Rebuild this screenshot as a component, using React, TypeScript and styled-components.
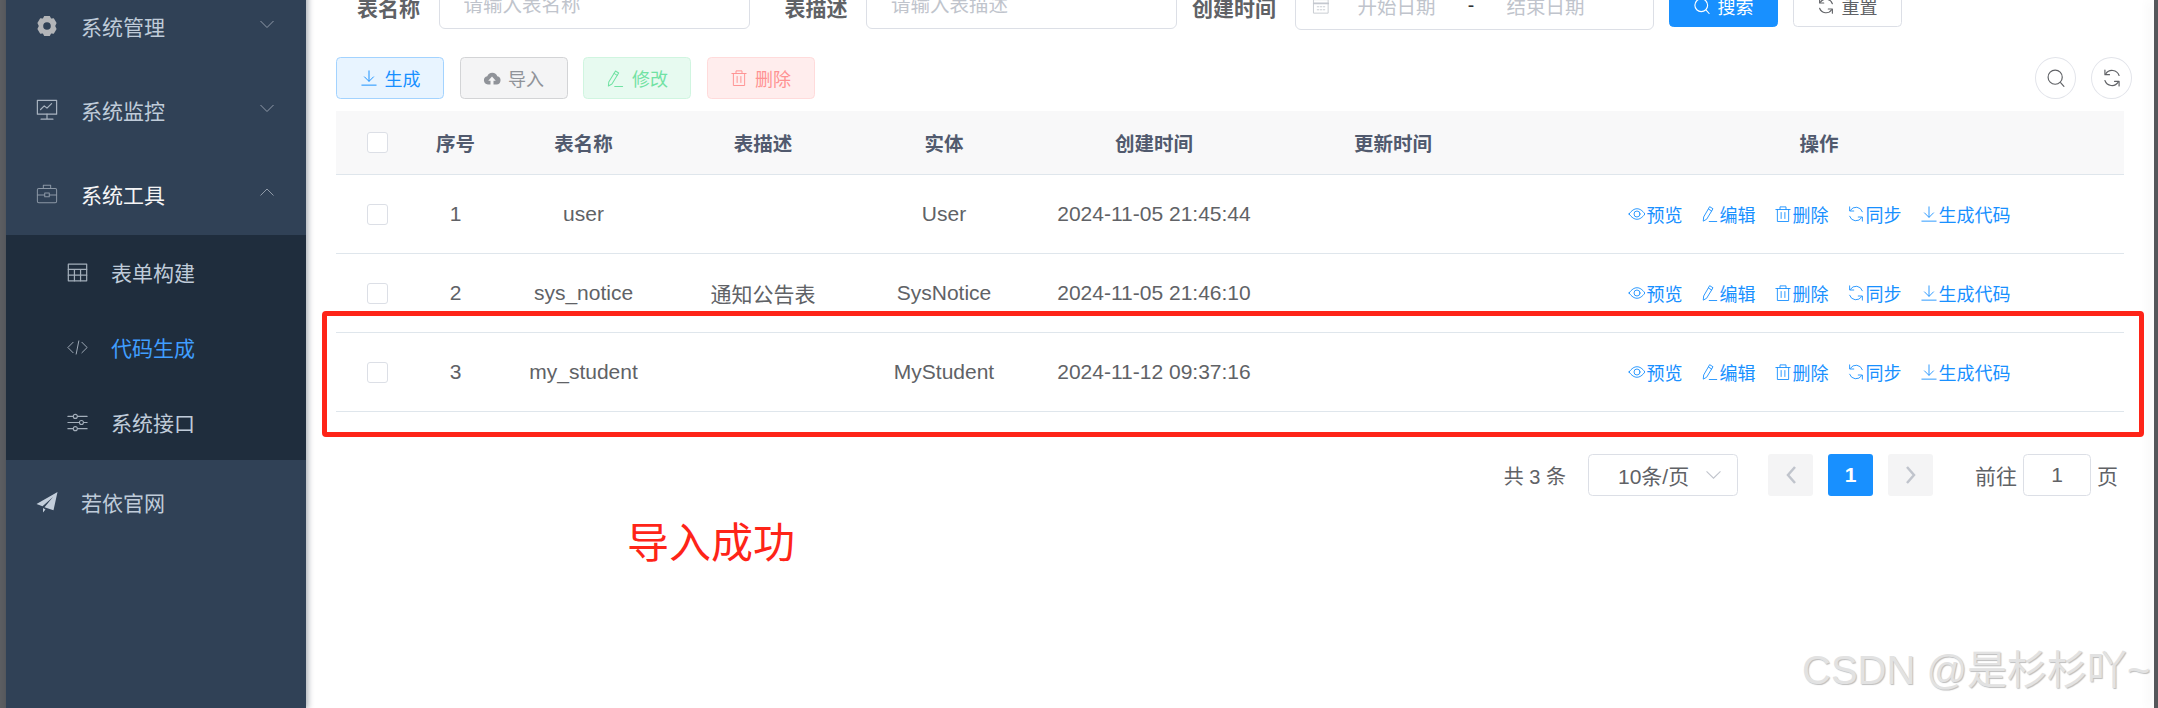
import React from "react";
import styled, { createGlobalStyle, css } from "styled-components";

const GlobalStyle = createGlobalStyle`
  html, body {
    margin: 0;
    padding: 0;
    height: 100%;
    overflow: hidden;
    background: #fff;
  }
  body {
    font-family: "Liberation Sans", "Noto Sans CJK SC", sans-serif;
  }
`;

type IconProps = { size?: number; weight?: number };

const Svg = ({ size = 18, weight = 1.2, children }: IconProps & { children: React.ReactNode }) => (
  <svg
    width={size}
    height={size}
    viewBox="0 0 24 24"
    fill="none"
    stroke="currentColor"
    strokeWidth={weight}
    strokeLinecap="round"
    strokeLinejoin="round"
  >
    {children}
  </svg>
);

//* element style icons
const EyeIcon = (p: IconProps) => (
  <Svg {...p}>
    <path d="M1.5 12C5 7 8.5 5 12 5s7 2 10.5 7c-3.500 5-7 7-10.500 7S5 17 1.500 12z" />
    <circle cx="12" cy="12" r="4" />
  </Svg>
);
const PenIcon = (p: IconProps) => (
  <Svg {...p}>
    <path d="M12 2.500l4 2.500-8.500 14L3 21.500l.5-5z" />
    <path d="M10.200 5.500l4 2.500" />
    <path d="M11 22h10" />
  </Svg>
);
const TrashIcon = (p: IconProps) => (
  <Svg {...p}>
    <path d="M2.500 6h19" />
    <path d="M8 6V2.500h8V6" />
    <path d="M4.500 6v16h15V6" />
    <path d="M9.500 10v8M14.500 10v8" />
  </Svg>
);
const RefreshIcon = (p: IconProps) => (
  <Svg {...p}>
    <path d="M20.500 9A9 9 0 0 0 4.500 7" />
    <path d="M3.500 15a9 9 0 0 0 16 2" />
    <path d="M3.500 2.500V8H9" />
    <path d="M20.500 21.500V16H15" />
  </Svg>
);
const DownloadIcon = (p: IconProps) => (
  <Svg {...p}>
    <path d="M12 2.500V16" />
    <path d="M6 10.500l6 6 6-6" />
    <path d="M2.500 21.500h19" />
  </Svg>
);
const CloudIcon = (p: IconProps) => (
  <svg width={p.size ?? 18} height={p.size ?? 18} viewBox="0 0 24 24" fill="currentColor">
    <path d="M6.500 20.500a5.500 5.500 0 0 1-.8-10.900A7 7 0 0 1 19 9.800a5.400 5.400 0 0 1-1 10.700h-4v-5h3l-5-5.500-5 5.500h3v5z" />
  </svg>
);
const SearchIcon = (p: IconProps) => (
  <Svg {...p}>
    <circle cx="11" cy="11" r="8.500" />
    <path d="M17.500 17.500l4 4.500" />
  </Svg>
);
const CalendarIcon = (p: IconProps) => (
  <Svg {...p}>
    <rect x="2.500" y="3.500" width="19" height="18" />
    <path d="M2.500 8.500h19" strokeWidth={2.600} />
    <path d="M7 13h2M11 13h2M15 13h2M7 17h2M11 17h2M15 17h2" />
  </Svg>
);
const ChevronDown = ({ up, size = 14 }: { up?: boolean; size?: number }) => (
  <svg width={size} height={size} viewBox="0 0 14 14" fill="none" stroke="currentColor" strokeWidth="1">
    <path d={up ? "M.5 10.500L7 4l6.500 6.500" : "M.5 4L7 10.500 13.500 4"} />
  </svg>
);
const GearIcon = () => (
  <svg width="22" height="22" viewBox="0 0 22 22" fill="currentColor">
    <path
      fillRule="evenodd"
      d="M8.200 1h5.600l1.300 2.400 2.700-.1 2.800 4.800-1.400 2.900 1.400 2.900-2.800 4.800-2.700-.1L13.800 21H8.200l-1.300-2.400-2.700.1-2.800-4.800L2.800 11 1.400 8.100l2.800-4.800 2.700.1zM11 7.200a3.800 3.800 0 1 0 0 7.600 3.800 3.800 0 0 0 0-7.600z"
    />
  </svg>
);
const MonitorIcon = () => (
  <Svg size={22} weight={1.300}>
    <rect x="1.500" y="1.500" width="21" height="15" />
    <path d="M5 11.500l4-4 3 2.500 5-5" />
    <path d="M12 16.500v5.500M5.500 22h13" />
  </Svg>
);
const CaseIcon = () => (
  <Svg size={22} weight={1.100}>
    <rect x="1.500" y="6" width="21" height="15.500" rx="1.500" />
    <path d="M8 6V2.500h8V6" />
    <path d="M1.500 13h8M14.500 13h8" />
    <rect x="9.500" y="11" width="5" height="4" />
  </Svg>
);
const TableIcon = () => (
  <Svg size={21} weight={1.400}>
    <rect x="1.500" y="2.500" width="21" height="19" />
    <path d="M1.500 8.500h21M1.500 15h21M8.500 8.500v13M15.500 8.500v13" />
  </Svg>
);
const CodeIcon = () => (
  <Svg size={21} weight={1.100}>
    <path d="M7 6l-6 6 6 6M17 6l6 6-6 6M13.500 4.500l-3 15" />
  </Svg>
);
const SlidersIcon = () => (
  <Svg size={21} weight={1.200}>
    <path d="M1 5h6M12 5h11M1 12h13M19 12h4M1 19h6M12 19h11" />
    <circle cx="9.500" cy="5" r="2.300" />
    <circle cx="16.500" cy="12" r="2.300" />
    <circle cx="9.500" cy="19" r="2.300" />
  </Svg>
);
const PlaneIcon = () => (
  <svg width="22" height="22" viewBox="0 0 22 22" fill="currentColor">
    <path d="M21.500 1L.5 13l6 2.200L17 6 8.500 16.300l9 3zM7 17v4.500l2.500-3z" />
  </svg>
);

//* sidebar
const menuTop = [
  { title: "系统管理", icon: <GearIcon />, tone: "#b3b5b8" },
  { title: "系统监控", icon: <MonitorIcon />, tone: "#a9b4c1" },
];
const subMenu = [
  { title: "表单构建", icon: <TableIcon /> },
  { title: "代码生成", icon: <CodeIcon />, active: true },
  { title: "系统接口", icon: <SlidersIcon /> },
];

//* table
const columns = [
  { title: "序号", key: "index" },
  { title: "表名称", key: "name" },
  { title: "表描述", key: "comment" },
  { title: "实体", key: "entity" },
  { title: "创建时间", key: "created" },
  { title: "更新时间", key: "updated" },
] as const;

const rows = [
  { index: "1", name: "user", comment: "", entity: "User", created: "2024-11-05 21:45:44", updated: "" },
  { index: "2", name: "sys_notice", comment: "通知公告表", entity: "SysNotice", created: "2024-11-05 21:46:10", updated: "" },
  { index: "3", name: "my_student", comment: "", entity: "MyStudent", created: "2024-11-12 09:37:16", updated: "" },
];

const rowActions = [
  { label: "预览", icon: <EyeIcon /> },
  { label: "编辑", icon: <PenIcon /> },
  { label: "删除", icon: <TrashIcon /> },
  { label: "同步", icon: <RefreshIcon /> },
  { label: "生成代码", icon: <DownloadIcon /> },
];

function App() {
  return (
    <Shell>
      <GlobalStyle />
      <LeftEdge />
      <Sidebar>
        {menuTop.map((item) => (
          <MenuItem key={item.title}>
            <MenuIcon $tone={item.tone}>{item.icon}</MenuIcon>
            <MenuText>{item.title}</MenuText>
            <MenuArrow>
              <ChevronDown />
            </MenuArrow>
          </MenuItem>
        ))}
        <MenuItem>
          <MenuIcon $tone="#8b97a5">
            <CaseIcon />
          </MenuIcon>
          <MenuText $open>系统工具</MenuText>
          <MenuArrow>
            <ChevronDown up />
          </MenuArrow>
        </MenuItem>
        <SubMenu>
          {subMenu.map((item) => (
            <SubItem key={item.title}>
              <SubIcon>{item.icon}</SubIcon>
              <SubText $active={item.active}>{item.title}</SubText>
            </SubItem>
          ))}
        </SubMenu>
        <MenuItem>
          <MenuIcon $tone="#c3cedb">
            <PlaneIcon />
          </MenuIcon>
          <MenuText>若依官网</MenuText>
        </MenuItem>
      </Sidebar>

      <Main>
        <SearchForm>
          <FieldLabel>表名称</FieldLabel>
          <TextInput placeholder="请输入表名称" readOnly />
          <FieldLabel $spaced>表描述</FieldLabel>
          <TextInput placeholder="请输入表描述" readOnly />
          <FieldLabel $tight>创建时间</FieldLabel>
          <DateRange>
            <DateIcon>
              <CalendarIcon />
            </DateIcon>
            <DateHolder>开始日期</DateHolder>
            <DateDash>-</DateDash>
            <DateHolder>结束日期</DateHolder>
          </DateRange>
          <FormButton $primary>
            <SearchIcon size={18} weight={1.500} />
            搜索
          </FormButton>
          <FormButton>
            <RefreshIcon size={18} weight={1.500} />
            重置
          </FormButton>
        </SearchForm>

        <Toolbar>
          <ToolGroup>
            <ToolButton $kind="primary">
              <DownloadIcon size={18} weight={1.300} />
              生成
            </ToolButton>
            <ToolButton $kind="info">
              <CloudIcon size={18} />
              导入
            </ToolButton>
            <ToolButton $kind="success">
              <PenIcon size={19} weight={1.300} />
              修改
            </ToolButton>
            <ToolButton $kind="danger">
              <TrashIcon size={18} weight={1.300} />
              删除
            </ToolButton>
          </ToolGroup>
          <RoundGroup>
            <RoundButton>
              <SearchIcon size={20} weight={1.400} />
            </RoundButton>
            <RoundButton>
              <RefreshIcon size={20} weight={1.400} />
            </RoundButton>
          </RoundGroup>
        </Toolbar>

        <Table>
          <HeadRow>
            <Cell>
              <Check />
            </Cell>
            {columns.map((col) => (
              <Cell key={col.key}>{col.title}</Cell>
            ))}
            <Cell>操作</Cell>
          </HeadRow>
          {rows.map((row) => (
            <BodyRow key={row.index}>
              <Cell>
                <Check />
              </Cell>
              {columns.map((col) => (
                <Cell key={col.key}>{row[col.key]}</Cell>
              ))}
              <ActionCell>
                {rowActions.map((action) => (
                  <ActionLink key={action.label}>
                    {action.icon}
                    {action.label}
                  </ActionLink>
                ))}
              </ActionCell>
            </BodyRow>
          ))}
        </Table>

        <Pagination>
          <PageTotal>共 3 条</PageTotal>
          <PageSize>
            10条/页
            <PageSizeArrow>
              <ChevronDown size={15} />
            </PageSizeArrow>
          </PageSize>
          <PagerButton>
            <PagerArrow viewBox="0 0 12 20">
              <path d="M10 2L3 10l7 8" />
            </PagerArrow>
          </PagerButton>
          <PagerButton $current>1</PagerButton>
          <PagerButton>
            <PagerArrow viewBox="0 0 12 20">
              <path d="M2 2l7 8-7 8" />
            </PagerArrow>
          </PagerButton>
          <PageJump>前往</PageJump>
          <JumpInput>1</JumpInput>
          <PageUnit>页</PageUnit>
        </Pagination>
      </Main>
      <RightEdge />

      <RedFrame />
      <RedNote>导入成功</RedNote>
      <Watermark>CSDN @是杉杉吖~</Watermark>
    </Shell>
  );
}

const Shell = styled.div`
  position: relative;
  display: flex;
  width: 2158px;
  height: 708px;
  overflow: hidden;
  background: #fff;
`;

const LeftEdge = styled.div`
  flex: 0 0 6px;
  background: #5b5d61;
`;

const RightEdge = styled.div`
  flex: 0 0 4px;
  background: #55575b;
  box-shadow: -6px 0 10px rgba(0, 0, 0, 0.05);
`;

const Sidebar = styled.aside`
  flex: 0 0 300px;
  height: 725px;
  margin-top: -16.500px;
  background: #304156;
  box-shadow: 2px 0 6px rgba(0, 21, 41, 0.35);
  z-index: 1;
`;

const MenuItem = styled.div`
  display: flex;
  align-items: center;
  height: 84px;
  padding-left: 30px;
`;

const MenuIcon = styled.span<{ $tone: string }>`
  display: flex;
  width: 22px;
  color: ${(p) => p.$tone};
`;

const MenuText = styled.span<{ $open?: boolean }>`
  margin-left: 23px;
  font-size: 21px;
  color: ${(p) => (p.$open ? "#f4f4f5" : "#bfcbd9")};
`;

const MenuArrow = styled.span`
  display: flex;
  margin-left: 95px;
  margin-top: -4px;
  color: #8f9aa8;
`;

const SubMenu = styled.div`
  margin-top: -1px;
  background: #1f2d3d;
`;

const SubItem = styled.div`
  display: flex;
  align-items: center;
  height: 75px;
  padding-left: 61px;
`;

const SubIcon = styled.span`
  display: flex;
  width: 21px;
  color: #a3aeba;
`;

const SubText = styled.span<{ $active?: boolean }>`
  margin-left: 23px;
  font-size: 21px;
  color: ${(p) => (p.$active ? "#409eff" : "#bfcbd9")};
`;

const Main = styled.main`
  flex: 1;
  min-width: 0;
  margin-top: -19px;
  padding: 0 30px;
`;

const SearchForm = styled.div`
  display: flex;
  align-items: center;
  height: 48px;
  padding-left: 21px;
`;

const FieldLabel = styled.label<{ $spaced?: boolean; $tight?: boolean }>`
  flex: none;
  margin-right: 18.500px;
  margin-left: ${(p) => (p.$spaced ? "35px" : p.$tight ? "15px" : "0")};
  padding-top: 4px;
  font-size: 21px;
  font-weight: 700;
  color: #606266;
`;

const TextInput = styled.input`
  box-sizing: border-box;
  flex: none;
  width: 311px;
  height: 48px;
  padding: 0 24px;
  border: 1.500px solid #dcdfe6;
  border-radius: 6px;
  outline: none;
  font-family: inherit;
  font-size: 19.500px;
  color: #606266;
  background: #fff;

  &::placeholder {
    color: #c0c4cc;
  }
`;

const DateRange = styled.div`
  box-sizing: border-box;
  flex: none;
  display: flex;
  align-items: center;
  width: 359px;
  height: 49px;
  margin-top: 1px;
  padding-left: 16px;
  border: 1.500px solid #dcdfe6;
  border-radius: 6px;
`;

const DateIcon = styled.span`
  display: flex;
  width: 45px;
  color: #c4c8cf;
`;

const DateHolder = styled.span`
  width: 80px;
  font-size: 19.500px;
  text-align: center;
  color: #c0c4cc;
`;

const DateDash = styled.span`
  width: 69px;
  font-size: 19.500px;
  text-align: center;
  color: #303133;
`;

const FormButton = styled.button<{ $primary?: boolean }>`
  box-sizing: border-box;
  flex: none;
  display: flex;
  align-items: center;
  justify-content: center;
  gap: 7px;
  width: 109px;
  height: 42px;
  margin-top: 2px;
  margin-left: 15px;
  padding: 0;
  border: 1.500px solid ${(p) => (p.$primary ? "#1890ff" : "#dcdfe6")};
  border-radius: 4.500px;
  font-family: inherit;
  font-size: 18px;
  color: ${(p) => (p.$primary ? "#fff" : "#606266")};
  background: ${(p) => (p.$primary ? "#1890ff" : "#fff")};
`;

const Toolbar = styled.div`
  display: flex;
  justify-content: space-between;
  margin-top: 28px;
  margin-right: -8px;
`;

const ToolGroup = styled.div`
  display: flex;
  gap: 15.500px;
`;

const toolKinds = {
  primary: css`
    color: #1890ff;
    background: #e8f4ff;
    border-color: #a3d3ff;
  `,
  info: css`
    color: #909399;
    background: #f4f4f5;
    border-color: #d3d4d6;
  `,
  success: css`
    color: #71e2a3;
    background: #e7faf0;
    border-color: #d0f5e0;
  `,
  danger: css`
    color: #ff9292;
    background: #ffeded;
    border-color: #ffdbdb;
  `,
};

const ToolButton = styled.button<{ $kind: keyof typeof toolKinds }>`
  box-sizing: border-box;
  display: flex;
  align-items: center;
  justify-content: center;
  gap: 7px;
  width: 108px;
  height: 42px;
  padding: 0;
  border: 1.500px solid;
  border-radius: 4.500px;
  font-family: inherit;
  font-size: 18px;
  ${(p) => toolKinds[p.$kind]}
`;

const RoundGroup = styled.div`
  display: flex;
  gap: 15px;
`;

const RoundButton = styled.button`
  box-sizing: border-box;
  display: flex;
  align-items: center;
  justify-content: center;
  width: 41px;
  height: 42px;
  padding: 0;
  border: 1.500px solid #e2e4ea;
  border-radius: 50%;
  color: #606266;
  background: #fff;
`;

const Table = styled.div`
  margin-top: 12px;
`;

const gridColumns = "82px 75px 181px 178px 184px 236px 242px 610px";

const HeadRow = styled.div`
  display: grid;
  grid-template-columns: ${gridColumns};
  height: 64px;
  border-bottom: 1.500px solid #dfe6ec;
  box-sizing: border-box;
  font-size: 19.500px;
  font-weight: 700;
  color: #515a6e;
  background: #f8f8f9;
`;

const BodyRow = styled.div`
  display: grid;
  grid-template-columns: ${gridColumns};
  box-sizing: border-box;
  height: 79px;
  border-bottom: 1.500px solid #dfe6ec;
  font-size: 21px;
  color: #606266;
`;

const Cell = styled.div`
  display: flex;
  align-items: center;
  justify-content: center;
  white-space: nowrap;
`;

const ActionCell = styled(Cell)`
  gap: 18px;
`;

const ActionLink = styled.span`
  display: flex;
  align-items: center;
  gap: 1px;
  font-size: 18px;
  color: #1890ff;
`;

const Check = styled.span`
  box-sizing: border-box;
  width: 21px;
  height: 21px;
  border: 1.500px solid #dcdfe6;
  border-radius: 3px;
  background: #fff;
`;

const Pagination = styled.div`
  display: flex;
  align-items: center;
  justify-content: flex-end;
  height: 42px;
  margin-top: 42px;
  padding-right: 6px;
  font-size: 21px;
  color: #606266;
`;

const PageTotal = styled.span`
  margin-right: 22px;
  font-size: 20px;
`;

const PageSize = styled.div`
  box-sizing: border-box;
  position: relative;
  display: flex;
  align-items: center;
  width: 150px;
  height: 42px;
  margin-right: 30px;
  padding-left: 29px;
  border: 1.500px solid #dcdfe6;
  border-radius: 4.500px;
`;

const PageSizeArrow = styled.span`
  position: absolute;
  right: 16px;
  top: 12px;
  display: flex;
  color: #c0c4cc;
`;

const PagerButton = styled.div<{ $current?: boolean }>`
  display: flex;
  align-items: center;
  justify-content: center;
  width: 45px;
  height: 42px;
  margin-right: 15px;
  border-radius: 3px;
  font-weight: 700;
  font-size: 21px;
  color: ${(p) => (p.$current ? "#fff" : "#c0c4cc")};
  background: ${(p) => (p.$current ? "#1890ff" : "#f4f4f5")};
`;

const PagerArrow = styled.svg`
  width: 12px;
  height: 20px;
  fill: none;
  stroke: #c0c4cc;
  stroke-width: 2.500;
`;

const PageJump = styled.span`
  margin-left: 27px;
  margin-right: 6px;
`;

const JumpInput = styled.div`
  box-sizing: border-box;
  display: flex;
  align-items: center;
  justify-content: center;
  width: 68px;
  height: 42px;
  border: 1.500px solid #dcdfe6;
  border-radius: 4.500px;
`;

const PageUnit = styled.span`
  margin-left: 6px;
`;

//* annotations drawn on top of the screenshot
const RedFrame = styled.div`
  position: absolute;
  left: 322px;
  top: 311px;
  box-sizing: border-box;
  width: 1822px;
  height: 126px;
  border: 5px solid #fe2418;
  border-radius: 4px;
  z-index: 2;
`;

const RedNote = styled.div`
  position: absolute;
  left: 627px;
  top: 514px;
  font-size: 42px;
  line-height: 60px;
  color: #fe2418;
`;

const Watermark = styled.div`
  position: absolute;
  left: 1802px;
  top: 646px;
  font-size: 40px;
  line-height: 48px;
  white-space: nowrap;
  color: #e2e2e2;
  text-shadow: 1px 1px 1px #bdbdbd;
  z-index: 3;
`;

export default App;
